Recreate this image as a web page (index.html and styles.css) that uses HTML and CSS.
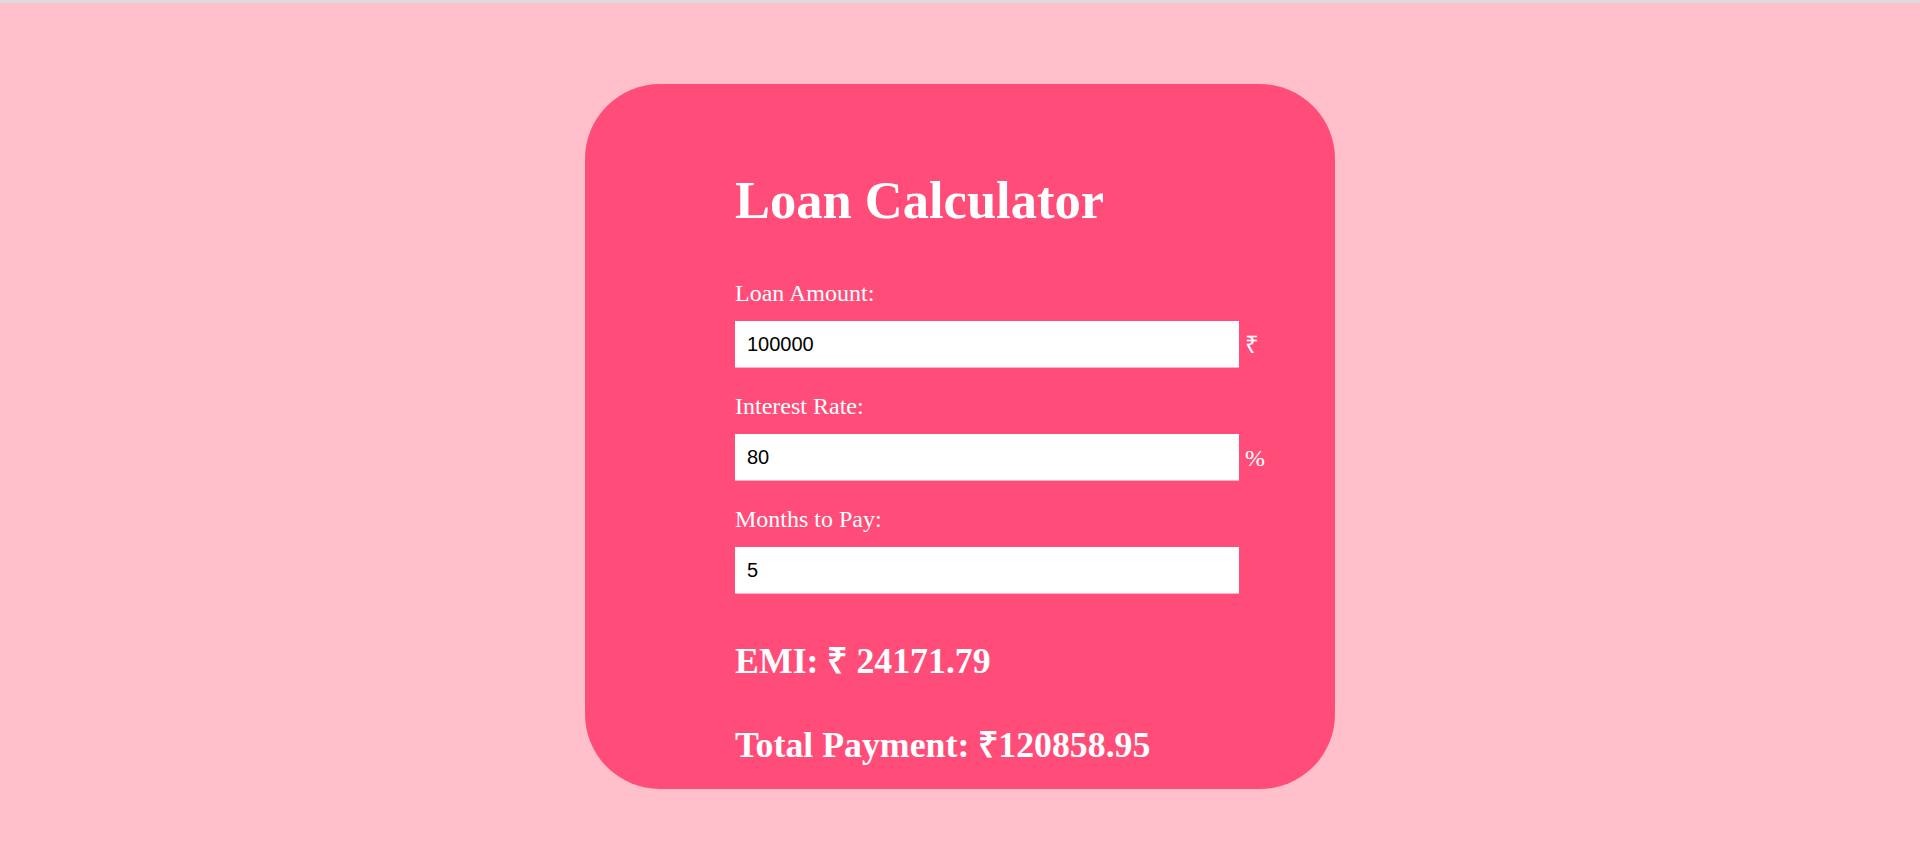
FILE: index.html
```html
<!DOCTYPE html>
<html lang="en">
<head>
<meta charset="UTF-8">
<title>Loan Calculator</title>
<link rel="stylesheet" href="styles.css">
</head>
<body>
  <div class="card">
    <h1 class="title">Loan Calculator</h1>
    <div class="field">
      <label class="label" for="amount">Loan Amount:</label>
      <div class="row">
        <input class="input" id="amount" type="text" value="100000">
        <span class="suffix suffix-rupee">₹</span>
      </div>
    </div>
    <div class="field">
      <label class="label" for="rate">Interest Rate:</label>
      <div class="row">
        <input class="input" id="rate" type="text" value="80">
        <span class="suffix">%</span>
      </div>
    </div>
    <div class="field">
      <label class="label" for="months">Months to Pay:</label>
      <div class="row">
        <input class="input" id="months" type="text" value="5">
      </div>
    </div>
    <h2 class="result result-emi">EMI: ₹ 24171.79</h2>
    <h2 class="result result-total">Total Payment: ₹120858.95</h2>
  </div>
</body>
</html>
```
FILE: styles.css
```css
html {
  background: #ffc0cb;
  border-top: 3px solid #dcdce0;
}
body {
  margin: 0;
  padding-top: 81px;
  font-family: "Liberation Serif", "Times New Roman", serif;
  display: flex;
  justify-content: center;
  color: #fff;
}
.card {
  width: 750px;
  box-sizing: border-box;
  background: #ff4c79;
  border-radius: 75px;
  padding: 86px 0 23px 150px;
  display: flex;
  flex-direction: column;
}
.title {
  margin: 0;
  font-size: 52.5px;
  line-height: 60px;
  font-weight: bold;
}
.field {
  display: flex;
  flex-direction: column;
  margin-top: 24px;
}
.field:first-of-type {
  margin-top: 49px;
}
.label {
  font-size: 24px;
  line-height: 28px;
  margin-bottom: 14px;
}
.row {
  display: flex;
  align-items: center;
  gap: 6px;
}
.input {
  flex: 0 0 504px;
  width: 504px;
  height: 47px;
  box-sizing: border-box;
  border: none;
  border-bottom: 1px solid #ffb0c4;
  background: #fff;
  padding: 0 12px;
  font-family: "Liberation Sans", Arial, sans-serif;
  font-size: 20px;
  color: #000;
  outline: none;
}
.suffix {
  font-size: 24px;
  line-height: 28px;
}
.suffix-rupee {
  font-family: "Noto Sans", "DejaVu Sans", sans-serif;
  font-size: 24px;
  margin-top: -2px;
}
.result {
  margin: 0;
  font-size: 35.8px;
  line-height: 42px;
  font-weight: bold;
}
.result-emi {
  margin-top: 46px;
}
.result-total {
  margin-top: 42px;
}
```
